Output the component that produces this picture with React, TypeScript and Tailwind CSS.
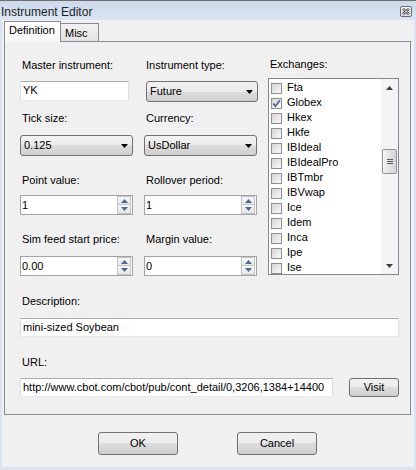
import React from "react";

const exchanges = [
  { name: "Fta", checked: false },
  { name: "Globex", checked: true },
  { name: "Hkex", checked: false },
  { name: "Hkfe", checked: false },
  { name: "IBIdeal", checked: false },
  { name: "IBIdealPro", checked: false },
  { name: "IBTmbr", checked: false },
  { name: "IBVwap", checked: false },
  { name: "Ice", checked: false },
  { name: "Idem", checked: false },
  { name: "Inca", checked: false },
  { name: "Ipe", checked: false },
  { name: "Ise", checked: false },
];

const btnBg =
  "bg-[linear-gradient(#f2f2f2_0%,#ebebeb_50%,#dddddd_50%,#cfcfcf_100%)]";

function Label({ children, className = "" }: { children: React.ReactNode; className?: string }) {
  return (
    <div className={`h-[13px] whitespace-nowrap pl-[2px] text-[11px] leading-[13px] text-black ${className}`}>
      {children}
    </div>
  );
}

function TextBox({ value, className = "" }: { value: string; className?: string }) {
  return (
    <div
      className={`overflow-hidden whitespace-nowrap border border-[#abadb3] border-x-[#dbdfe6] border-b-[#e3e9ef] bg-white pl-[2px] text-[11px] leading-[17px] text-black ${className}`}
    >
      {value}
    </div>
  );
}

function Combo({ value, className = "" }: { value: string; className?: string }) {
  return (
    <div
      className={`flex h-[21px] items-center justify-between rounded-[3px] border border-[#707070] ${btnBg} pl-[3px] pr-[4px] text-[11px] text-black ${className}`}
    >
      <span>{value}</span>
      <svg width="7" height="4" viewBox="0 0 7 4">
        <path d="M0 0h7L3.5 4z" fill="#000" />
      </svg>
    </div>
  );
}

function SpinArrow({ up }: { up?: boolean }) {
  return (
    <svg width="7" height="4" viewBox="0 0 7 4">
      <path d={up ? "M0 4h7L3.5 0z" : "M0 0h7L3.5 4z"} fill="#4d6a94" />
    </svg>
  );
}

function Spin({ value, className = "" }: { value: string; className?: string }) {
  return (
    <div className={`flex h-[20px] border border-[#a3a3a3] bg-white text-[11px] text-black ${className}`}>
      <div className="flex-1 pl-[1px] leading-[18px]">{value}</div>
      <div className="my-[0px] mr-[1px] flex w-[14px] flex-col">
        <div className="flex h-[9px] items-center justify-center border border-[#c3c3c3] bg-[linear-gradient(#f8f8f8,#e4e6ea)]">
          <SpinArrow up />
        </div>
        <div className="flex h-[9px] items-center justify-center border border-t-0 border-[#c3c3c3] bg-[linear-gradient(#f8f8f8,#e4e6ea)]">
          <SpinArrow />
        </div>
      </div>
    </div>
  );
}

function Check({ checked }: { checked: boolean }) {
  return (
    <div className="mt-[2px] flex h-[11px] w-[11px] shrink-0 items-center justify-center border border-[#8e8f8f] bg-[linear-gradient(135deg,#d6d6d6,#f8f8f8)]">
      {checked && (
        <svg width="9" height="9" viewBox="0 0 9 9">
          <path d="M1.2 4.6 3.4 7.2 7.8 1.2" fill="none" stroke="#4a5b93" strokeWidth="1.6" />
        </svg>
      )}
    </div>
  );
}

function ScrollArrow({ up }: { up?: boolean }) {
  return (
    <svg width="7" height="4" viewBox="0 0 7 4">
      <path d={up ? "M0 4h7L3.5 0z" : "M0 0h7L3.5 4z"} fill="#3c3c3c" />
    </svg>
  );
}

function ExchangeList() {
  return (
    <div className="mt-[7px] flex h-[197px] border border-[#828790] bg-white">
      <div className="flex-1 overflow-hidden pl-[2px] pt-[2px]">
        {exchanges.map((ex) => (
          <div key={ex.name} className="flex h-[15px] items-start">
            <Check checked={ex.checked} />
            <span className="ml-[5px] text-[11px] leading-[12px] text-black">{ex.name}</span>
          </div>
        ))}
      </div>
      <div className="flex w-[17px] flex-col bg-[#f4f4f4]">
        <div className="flex h-[17px] items-center justify-center">
          <ScrollArrow up />
        </div>
        <div className="flex-1">
          <div className="mx-[1px] mt-[53px] flex h-[25px] flex-col items-center justify-center gap-[1px] rounded-[2px] border border-[#959595] bg-[linear-gradient(90deg,#f4f4f4,#e2e2e2,#d4d4d4)]">
            <div className="h-[1px] w-[6px] bg-[#5a5a5a]" />
            <div className="h-[1px] w-[6px] bg-[#5a5a5a]" />
            <div className="h-[1px] w-[6px] bg-[#5a5a5a]" />
          </div>
        </div>
        <div className="flex h-[17px] items-center justify-center">
          <ScrollArrow />
        </div>
      </div>
    </div>
  );
}

export default function App() {
  return (
    <div className="flex h-[470px] w-[416px] flex-col border-t border-[#6f6f6f] bg-[#d9e4f1] font-['Liberation_Sans',Arial,sans-serif]">
      {/* title bar */}
      <div className="flex h-[19px] items-start justify-between bg-[linear-gradient(#cbd9ea,#dbe6f3)]">
        <span className="mt-[4px] pl-[1px] text-[12px] leading-[14px] text-[#1e1e1e]">Instrument Editor</span>
        <div className="mr-[4px] mt-[5px] flex h-[11px] w-[12px] items-center justify-center rounded-[2px] border border-[#6d6d6d] bg-[linear-gradient(#f4f6f9,#d9dfe8)]">
          <svg width="8" height="7" viewBox="0 0 8 7">
            <path d="M1 0.8 7 6.2M7 0.8 1 6.2" stroke="#3b3b3b" strokeWidth="2.4" />
            <path d="M1 0.8 7 6.2M7 0.8 1 6.2" stroke="#ffffff" strokeWidth="0.9" />
          </svg>
        </div>
      </div>

      {/* body */}
      <div className="mx-[2px] mb-[3px] flex flex-1 flex-col bg-[#f0f0f0] pt-[1px]">
        {/* tabs */}
        <div className="ml-[2px] flex h-[20px] items-end">
          <div className="relative z-10 mb-[-1px] h-[21px] w-[57px] border border-b-0 border-[#898c95] bg-[linear-gradient(#ffffff,#f6f6f6)] pl-[4px] pt-[2px] text-[11px] leading-[13px] text-black">
            Definition
          </div>
          <div className="h-[18px] w-[38px] border border-b-0 border-l-0 border-[#898c95] bg-[linear-gradient(#f2f2f2,#e3e3e3)] pl-[4px] pt-[3px] text-[11px] leading-[13px] text-black">
            Misc
          </div>
        </div>

        {/* panel */}
        <div className="ml-[2px] flex w-[407px] flex-col border border-[#898c95] bg-[#f0f0f0] pb-[17px] pl-[15px] pr-[11px] pt-[16px]">
          <div className="flex items-start">
            <div className="flex w-[237px] flex-col pt-[1px]">
              <div className="flex gap-[11px]">
                <div className="w-[113px]">
                  <Label>Master instrument:</Label>
                  <TextBox value="YK" className="mt-[9px] h-[20px] w-[109px]" />
                </div>
                <div className="w-[113px]">
                  <Label>Instrument type:</Label>
                  <Combo value="Future" className="ml-[2px] mt-[9px] w-[112px]" />
                </div>
              </div>
              <div className="mt-[10px] flex gap-[11px]">
                <div className="w-[113px]">
                  <Label>Tick size:</Label>
                  <Combo value="0.125" className="mt-[10px]" />
                </div>
                <div className="w-[113px]">
                  <Label>Currency:</Label>
                  <Combo value="UsDollar" className="mt-[10px]" />
                </div>
              </div>
              <div className="mt-[18px] flex gap-[11px]">
                <div className="w-[113px]">
                  <Label>Point value:</Label>
                  <Spin value="1" className="mt-[8px]" />
                </div>
                <div className="w-[113px]">
                  <Label>Rollover period:</Label>
                  <Spin value="1" className="mt-[8px]" />
                </div>
              </div>
              <div className="mt-[18px] flex gap-[11px]">
                <div className="w-[113px]">
                  <Label>Sim feed start price:</Label>
                  <Spin value="0.00" className="mt-[10px]" />
                </div>
                <div className="w-[113px]">
                  <Label>Margin value:</Label>
                  <Spin value="0" className="mt-[10px]" />
                </div>
              </div>
            </div>
            <div className="ml-[11px] flex w-[131px] flex-col">
              <Label>Exchanges:</Label>
              <ExchangeList />
            </div>
          </div>

          <Label className="mt-[19px]">Description:</Label>
          <TextBox value="mini-sized Soybean" className="mt-[10px] h-[19px] w-[379px]" />

          <Label className="mt-[19px]">URL:</Label>
          <div className="mt-[9px] flex items-start">
            <TextBox
              value="http://www.cbot.com/cbot/pub/cont_detail/0,3206,1384+14400"
              className="h-[19px] w-[313px]"
            />
            <button
              className={`ml-[16px] h-[19px] w-[50px] rounded-[3px] border border-[#707070] ${btnBg} text-[11px] leading-[17px] text-black`}
            >
              Visit
            </button>
          </div>
        </div>

        {/* dialog buttons */}
        <div className="ml-[96px] mt-[17px] flex gap-[59px]">
          <button
            className={`h-[23px] w-[80px] rounded-[3px] border border-[#707070] ${btnBg} text-[11px] text-black`}
          >
            OK
          </button>
          <button
            className={`h-[23px] w-[80px] rounded-[3px] border border-[#707070] ${btnBg} text-[11px] text-black`}
          >
            Cancel
          </button>
        </div>
      </div>
    </div>
  );
}
